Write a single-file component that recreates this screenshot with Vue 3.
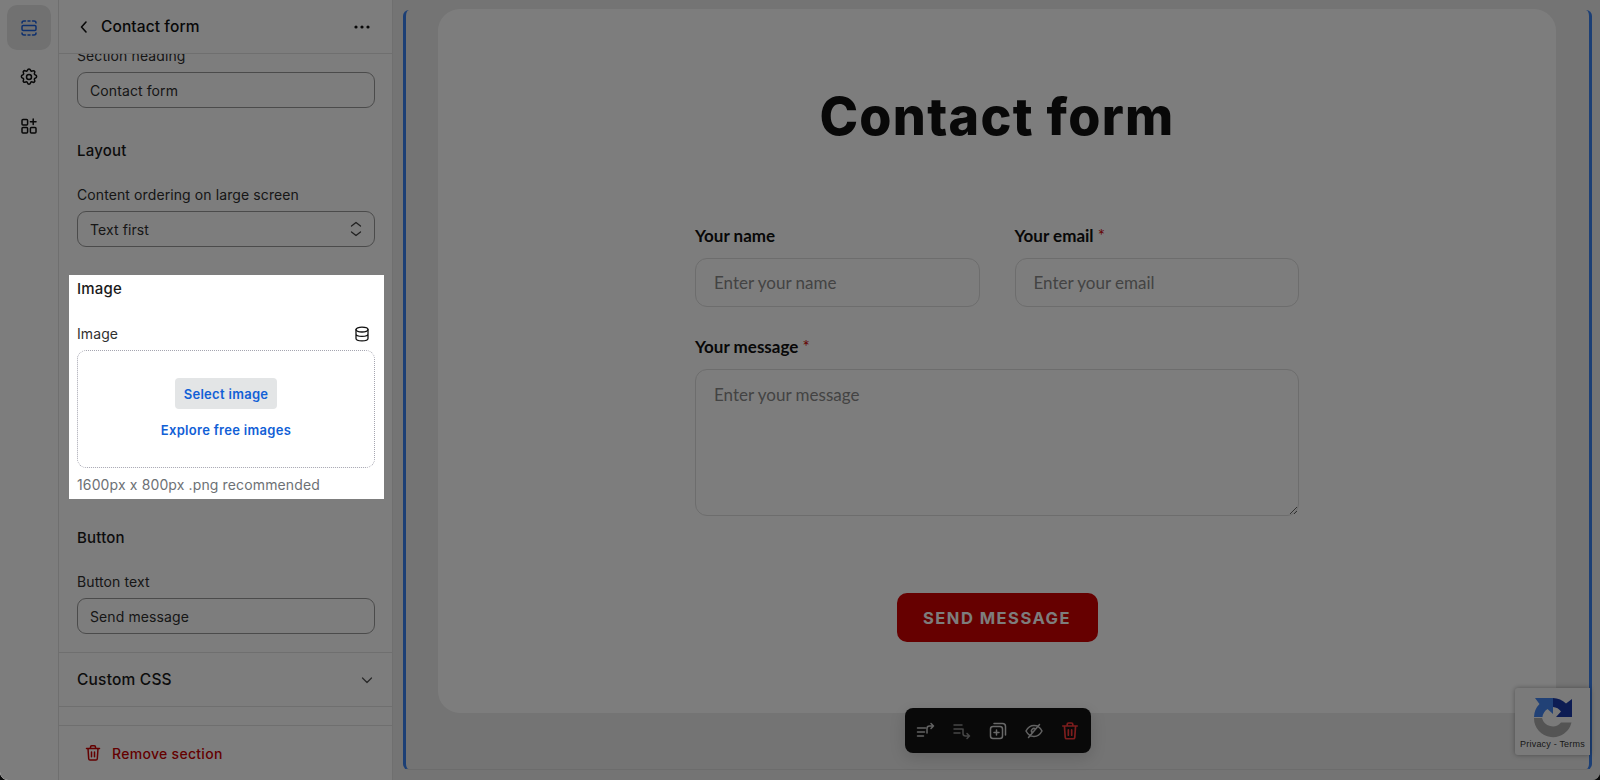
<script setup>
const rail = [
  { id: 'sections', active: true },
  { id: 'settings', active: false },
  { id: 'apps', active: false }
]
</script>

<template>
  <div class="app">
    <nav class="rail">
      <button v-for="r in rail" :key="r.id" class="rail-btn" :class="{ active: r.active }">
        <svg v-if="r.id === 'sections'" width="20" height="20" viewBox="0 0 20 20" fill="none" stroke="#1c62e0" stroke-width="1.5" stroke-linecap="round" stroke-linejoin="round">
          <path d="M3 5a2 2 0 0 1 2-2h1.500M9 3h2M13.500 3H15a2 2 0 0 1 2 2" />
          <rect x="3" y="7.500" width="14" height="5" rx="1.200" />
          <path d="M3 15a2 2 0 0 0 2 2h1.500M9 17h2M13.500 17H15a2 2 0 0 0 2-2" />
        </svg>
        <svg v-else-if="r.id === 'settings'" width="20" height="20" viewBox="0 0 24 24" fill="none" stroke="#111" stroke-width="1.8" stroke-linecap="round" stroke-linejoin="round">
          <path d="M10.3 3.6c.4-1.8 3-1.8 3.4 0a1.7 1.7 0 0 0 2.6 1.1c1.6-1 3.4.8 2.4 2.4a1.7 1.7 0 0 0 1.1 2.6c1.8.4 1.8 3 0 3.4a1.7 1.7 0 0 0-1.1 2.6c1 1.6-.8 3.4-2.4 2.4a1.7 1.7 0 0 0-2.6 1.1c-.4 1.8-3 1.8-3.4 0a1.7 1.7 0 0 0-2.6-1.1c-1.6 1-3.4-.8-2.4-2.4a1.7 1.7 0 0 0-1.1-2.6c-1.8-.4-1.8-3 0-3.4a1.7 1.7 0 0 0 1.1-2.6c-1-1.6.8-3.4 2.4-2.4a1.7 1.7 0 0 0 2.6-1.1z" />
          <circle cx="12" cy="12" r="3" />
        </svg>
        <svg v-else width="20" height="20" viewBox="0 0 20 20" fill="none" stroke="#111" stroke-width="1.5" stroke-linecap="round" stroke-linejoin="round">
          <rect x="3" y="3.500" width="5.600" height="5.600" rx="1" />
          <rect x="3" y="11.500" width="5.600" height="5.600" rx="1" />
          <rect x="11.400" y="11.500" width="5.600" height="5.600" rx="1" />
          <path d="M14.200 3v5.600M11.400 5.800H17" />
        </svg>
      </button>
    </nav>

    <aside class="panel">
      <header class="panel-head">
        <svg width="16" height="16" viewBox="0 0 16 16" fill="none" stroke="#111" stroke-width="1.600" stroke-linecap="round" stroke-linejoin="round">
          <path d="M10 3 5.500 8l4.500 5" />
        </svg>
        <h1 class="panel-title">Contact form</h1>
        <svg class="more" width="18" height="6" viewBox="0 0 18 6" fill="#111">
          <circle cx="3" cy="3" r="1.600" /><circle cx="9" cy="3" r="1.600" /><circle cx="15" cy="3" r="1.600" />
        </svg>
      </header>

      <div class="panel-body">
        <div class="block">
          <label class="label clipped">Section heading</label>
          <input class="field" value="Contact form" />
        </div>

        <div class="block layout">
          <h2 class="heading">Layout</h2>
          <label class="label">Content ordering on large screen</label>
          <div class="field select">
            <span>Text first</span>
            <svg width="14" height="20" viewBox="0 0 14 20" fill="none" stroke="#444" stroke-width="1.300" stroke-linecap="round" stroke-linejoin="round">
              <path d="M2.500 7 7 3.500 11.500 7M2.500 13 7 16.500 11.500 13" />
            </svg>
          </div>
        </div>

        <section class="highlight">
          <h2 class="heading">Image</h2>
          <div class="label-row">
            <label class="label">Image</label>
            <svg width="16" height="16" viewBox="0 0 16 16" fill="none" stroke="#111" stroke-width="1.300" stroke-linecap="round" stroke-linejoin="round">
              <ellipse cx="8" cy="3.600" rx="6" ry="2.400" />
              <path d="M2 3.600v8.800c0 1.300 2.700 2.400 6 2.400s6-1.100 6-2.400V3.600M2 8c0 1.300 2.700 2.400 6 2.400s6-1.100 6-2.400" />
            </svg>
          </div>
          <div class="drop">
            <button class="select-btn">Select image</button>
            <a class="explore">Explore free images</a>
          </div>
          <p class="hint">1600px x 800px .png recommended</p>
        </section>

        <div class="block button-block">
          <h2 class="heading">Button</h2>
          <label class="label">Button text</label>
          <input class="field" value="Send message" />
        </div>

        <div class="collapse">
          <span class="heading flat">Custom CSS</span>
          <svg width="14" height="14" viewBox="0 0 14 14" fill="none" stroke="#555" stroke-width="1.300" stroke-linecap="round" stroke-linejoin="round">
            <path d="M2.500 5 7 9.500 11.500 5" />
          </svg>
        </div>
        <div class="spacer"></div>
      </div>

      <footer class="panel-foot">
        <svg width="18" height="18" viewBox="0 0 18 18" fill="none" stroke="#cc0000" stroke-width="1.500" stroke-linecap="round" stroke-linejoin="round">
          <path d="M2.500 4.500h13M6.500 4.500V3a1.200 1.200 0 0 1 1.200-1.200h2.600A1.200 1.200 0 0 1 11.500 3v1.500M4 4.500l.7 10.200A1.400 1.400 0 0 0 6.100 16h5.800a1.400 1.400 0 0 0 1.400-1.300L14 4.500M7.500 8v4.800M10.500 8v4.800" />
        </svg>
        <span>Remove section</span>
      </footer>
    </aside>

    <main class="stage">
      <div class="frame">
        <div class="card">
          <h2 class="title">Contact form</h2>
          <form class="form">
            <div class="row">
              <div class="col">
                <label class="f-label">Your name</label>
                <input class="f-input" placeholder="Enter your name" />
              </div>
              <div class="col">
                <label class="f-label">Your email <em>*</em></label>
                <input class="f-input" placeholder="Enter your email" />
              </div>
            </div>
            <div class="col msg">
              <label class="f-label">Your message <em>*</em></label>
              <textarea class="f-input f-area" placeholder="Enter your message"></textarea>
            </div>
            <button type="button" class="send">SEND MESSAGE</button>
          </form>
        </div>
      </div>

      <div class="toolbar">
        <svg width="20" height="20" viewBox="0 0 20 20" fill="none" stroke="#c9c9c9" stroke-width="1.500" stroke-linecap="round" stroke-linejoin="round">
          <path d="M1.500 7h8M1.500 11h7M1.500 15h6M11 12V7.500a2.500 2.500 0 0 1 2.500-2.500h4M15 2.500 17.500 5 15 7.500" />
        </svg>
        <svg width="20" height="20" viewBox="0 0 20 20" fill="none" stroke="#8f8f8f" stroke-width="1.500" stroke-linecap="round" stroke-linejoin="round">
          <path d="M2 4h8M2 8h8M2 12h6M11 8v4.500a2.500 2.500 0 0 0 2.500 2.500h4M15 12.500l2.500 2.500-2.500 2.500" />
        </svg>
        <svg width="20" height="20" viewBox="0 0 20 20" fill="none" stroke="#d6d6d6" stroke-width="1.500" stroke-linecap="round" stroke-linejoin="round">
          <rect x="2.500" y="5.500" width="12" height="12" rx="2.500" />
          <path d="M6 2.500h8.500a3 3 0 0 1 3 3V14M8.500 9v5M6 11.500h5" />
        </svg>
        <svg width="20" height="20" viewBox="0 0 20 20" fill="none" stroke="#c9c9c9" stroke-width="1.500" stroke-linecap="round" stroke-linejoin="round">
          <path d="M2 10s3-5.500 8-5.500S18 10 18 10s-3 5.500-8 5.500S2 10 2 10zM15.500 3.500l-11 13M8 11.500A2.500 2.500 0 0 1 11.500 8" />
        </svg>
        <svg width="20" height="20" viewBox="0 0 18 18" fill="none" stroke="#ff3b3b" stroke-width="1.500" stroke-linecap="round" stroke-linejoin="round">
          <path d="M2.500 4.500h13M6.500 4.500V3a1.200 1.200 0 0 1 1.200-1.200h2.600A1.200 1.200 0 0 1 11.500 3v1.500M4 4.500l.7 10.200A1.400 1.400 0 0 0 6.100 16h5.800a1.400 1.400 0 0 0 1.400-1.300L14 4.500M7.500 8v4.800M10.500 8v4.800" />
        </svg>
      </div>

      <div class="captcha">
        <svg width="46" height="46" viewBox="0 0 46 46">
          <path d="M4 24a19 19 0 0 0 37.500 4.500H31A11 11 0 0 1 12 24z" fill="#ababab" />
          <path d="M4 23A19 19 0 0 1 9.500 10L5 4H23V20L17.500 15A11 11 0 0 0 12.500 23Z" fill="#4485f0" />
          <path d="M23 4A19 19 0 0 1 36 9.500L42 5V23H26L31 17.500A11 11 0 0 0 23 13Z" fill="#1c3aa9" />
        </svg>
        <span class="cap-text">Privacy - Terms</span>
      </div>
    </main>

    <div class="dim"></div>
  </div>
</template>

<style>
html, body { margin: 0; background: #0a0a0a; }
</style>

<style scoped>
.app {
  position: relative;
  display: flex;
  width: 1600px;
  height: 780px;
  overflow: hidden;
  border-radius: 0 0 8px 8px;
  background: #ececec;
  font-family: Inter, "Liberation Sans", sans-serif;
  color: #202223;
}
.dim {
  position: absolute;
  inset: 0;
  z-index: 10;
  background: rgba(0, 0, 0, 0.51);
  pointer-events: none;
}
button, input, textarea { font: inherit; }

.rail {
  flex: none;
  width: 58px;
  border-right: 1px solid #e3e3e3;
  background: #fff;
  display: flex;
  flex-direction: column;
  align-items: center;
  gap: 4px;
  padding-top: 5px;
}
.rail-btn {
  width: 44px;
  height: 45px;
  border: 0;
  border-radius: 10px;
  background: transparent;
  display: flex;
  align-items: center;
  justify-content: center;
  padding: 0;
}
.rail-btn.active { background: #e6e6e6; }

.panel {
  flex: none;
  width: 333px;
  border-right: 1px solid #e3e3e3;
  background: #fff;
  display: flex;
  flex-direction: column;
}
.panel-head {
  flex: none;
  height: 54px;
  box-sizing: border-box;
  border-bottom: 1px solid #e3e3e3;
  display: flex;
  align-items: center;
  padding: 0 21px 0 17px;
}
.panel-title {
  margin: 0 0 0 9px;
  font-size: 15.500px;
  font-weight: 500;
  letter-spacing: 0.1px;
  color: #111;
  flex: 1;
}
.panel-body {
  flex: 1;
  overflow: hidden;
  display: flex;
  flex-direction: column;
  min-height: 0;
}
.block { padding: 0 17px 0 18px; }
.clipped { margin-top: -7px; }
.label {
  display: block;
  font-size: 14px;
  line-height: 17px;
  letter-spacing: 0.1px;
  color: #303030;
  margin-bottom: 8px;
}
.heading {
  margin: 0 0 26px;
  font-size: 15px;
  line-height: 18px;
  font-weight: 500;
  letter-spacing: 0.2px;
  color: #1a1a1a;
}
.field {
  display: flex;
  align-items: center;
  justify-content: space-between;
  box-sizing: border-box;
  width: 100%;
  height: 36px;
  border: 1px solid #9a9a9a;
  border-radius: 9px;
  padding: 0 12px;
  font-size: 14px;
  letter-spacing: 0.1px;
  color: #303030;
  background: #fff;
  outline: 0;
}
.select { padding-right: 11px; }
.layout { margin-top: 34px; }

.highlight {
  position: relative;
  z-index: 20;
  margin: 28px 8px 0 10px;
  padding: 5px 9px 0 8px;
  height: 224px;
  box-sizing: border-box;
  background: #fff;
}
.highlight .heading { margin-bottom: 27px; }
.label-row {
  display: flex;
  justify-content: space-between;
  align-items: center;
  height: 17px;
  margin-bottom: 8px;
  padding-right: 5px;
}
.label-row .label { margin: 0; }
.drop {
  box-sizing: border-box;
  height: 118px;
  border: 1px dotted #a5a5b0;
  border-radius: 9px;
  display: flex;
  flex-direction: column;
  align-items: center;
  padding-top: 27px;
}
.select-btn {
  height: 31px;
  width: 102px;
  border: 0;
  border-radius: 4px;
  background: #e3e5e6;
  color: #1160d6;
  font-size: 13px;
  font-weight: 600;
  letter-spacing: 0.3px;
  padding: 0;
}
.explore {
  margin-top: 13px;
  font-size: 13px;
  line-height: 16px;
  font-weight: 600;
  letter-spacing: 0.3px;
  color: #1160d6;
}
.hint {
  margin: 8px 0 0;
  font-size: 14px;
  line-height: 17px;
  letter-spacing: 0.13px;
  color: #6d7175;
}
.button-block { margin-top: 30px; }
.collapse {
  margin-top: 18px;
  flex: none;
  height: 55px;
  box-sizing: border-box;
  border-top: 1px solid #e3e3e3;
  border-bottom: 1px solid #e3e3e3;
  display: flex;
  align-items: center;
  justify-content: space-between;
  padding: 0 18px;
}
.flat { margin: 0; font-size: 15.500px; }
.spacer { flex: 1; }
.panel-foot {
  flex: none;
  height: 55px;
  box-sizing: border-box;
  border-top: 1px solid #e3e3e3;
  display: flex;
  align-items: center;
  gap: 10px;
  padding: 0 0 0 25px;
  font-size: 14px;
  font-weight: 500;
  letter-spacing: 0.3px;
  color: #cc0000;
}

.stage {
  position: relative;
  flex: 1;
  min-width: 0;
  padding: 10px 8px 10px 10px;
  box-sizing: border-box;
  display: flex;
}
.frame {
  flex: 1;
  box-sizing: border-box;
  border-left: 3px solid #3a80ee;
  border-right: 3px solid #3a80ee;
  border-bottom: 1px solid #dcdcdc;
  border-radius: 6px;
  padding: 0 33px 56px 32px;
  display: flex;
}
.card {
  flex: 1;
  margin-top: -1px;
  background: #fff;
  border-radius: 22px;
  display: flex;
  flex-direction: column;
  align-items: center;
}
.title {
  margin: 78px 0 0;
  font-family: Inter, Roboto, sans-serif;
  font-size: 52px;
  line-height: 60px;
  font-weight: 800;
  letter-spacing: 1.3px;
  color: #111;
}
.form {
  width: 604px;
  margin-top: 78px;
  display: flex;
  flex-direction: column;
}
.row { display: flex; gap: 35px; }
.col { flex: 1; display: flex; flex-direction: column; }
.msg { margin-top: 29px; }
.f-label {
  font-family: Lato, "Noto Sans", sans-serif;
  font-size: 17px;
  line-height: 22px;
  font-weight: 700;
  color: #111;
  margin-bottom: 11px;
}
.f-label em { font-style: normal; color: #d00000; font-weight: 400; }
.f-input {
  box-sizing: border-box;
  width: 100%;
  height: 49px;
  border: 1px solid #dedede;
  border-radius: 12px;
  padding: 0 18px;
  font-family: Lato, "Noto Sans", sans-serif;
  font-size: 17px;
  background: #fff;
  outline: 0;
}
.f-input::placeholder { color: #8a8a8a; opacity: 1; }
.f-area { height: 147px; padding-top: 14px; }
.send {
  align-self: center;
  margin-top: 77px;
  width: 201px;
  height: 49px;
  border: 0;
  border-radius: 10px;
  background: #d00000;
  color: #fff;
  font-family: Inter, Roboto, sans-serif;
  font-size: 16.500px;
  font-weight: 700;
  letter-spacing: 1.5px;
  padding: 0;
}

.toolbar {
  position: absolute;
  left: 512px;
  top: 708px;
  width: 186px;
  height: 45px;
  box-sizing: border-box;
  padding: 0 11px;
  background: #141414;
  border-radius: 8px;
  display: flex;
  align-items: center;
  justify-content: space-between;
  box-shadow: 0 4px 16px rgba(0, 0, 0, 0.15);
}
.captcha {
  position: absolute;
  left: 1122px;
  top: 688px;
  width: 75px;
  height: 67px;
  box-sizing: border-box;
  background: #f9f9f9;
  border-radius: 3px 0 0 3px;
  box-shadow: 0 0 5px rgba(0, 0, 0, 0.35);
  display: flex;
  flex-direction: column;
  align-items: center;
  padding-top: 6px;
}
.cap-text {
  font-family: "Liberation Sans", sans-serif;
  font-size: 9px;
  line-height: 11px;
  letter-spacing: 0.2px;
  color: #333;
  white-space: nowrap;
  margin-top: -1px;
}
</style>
